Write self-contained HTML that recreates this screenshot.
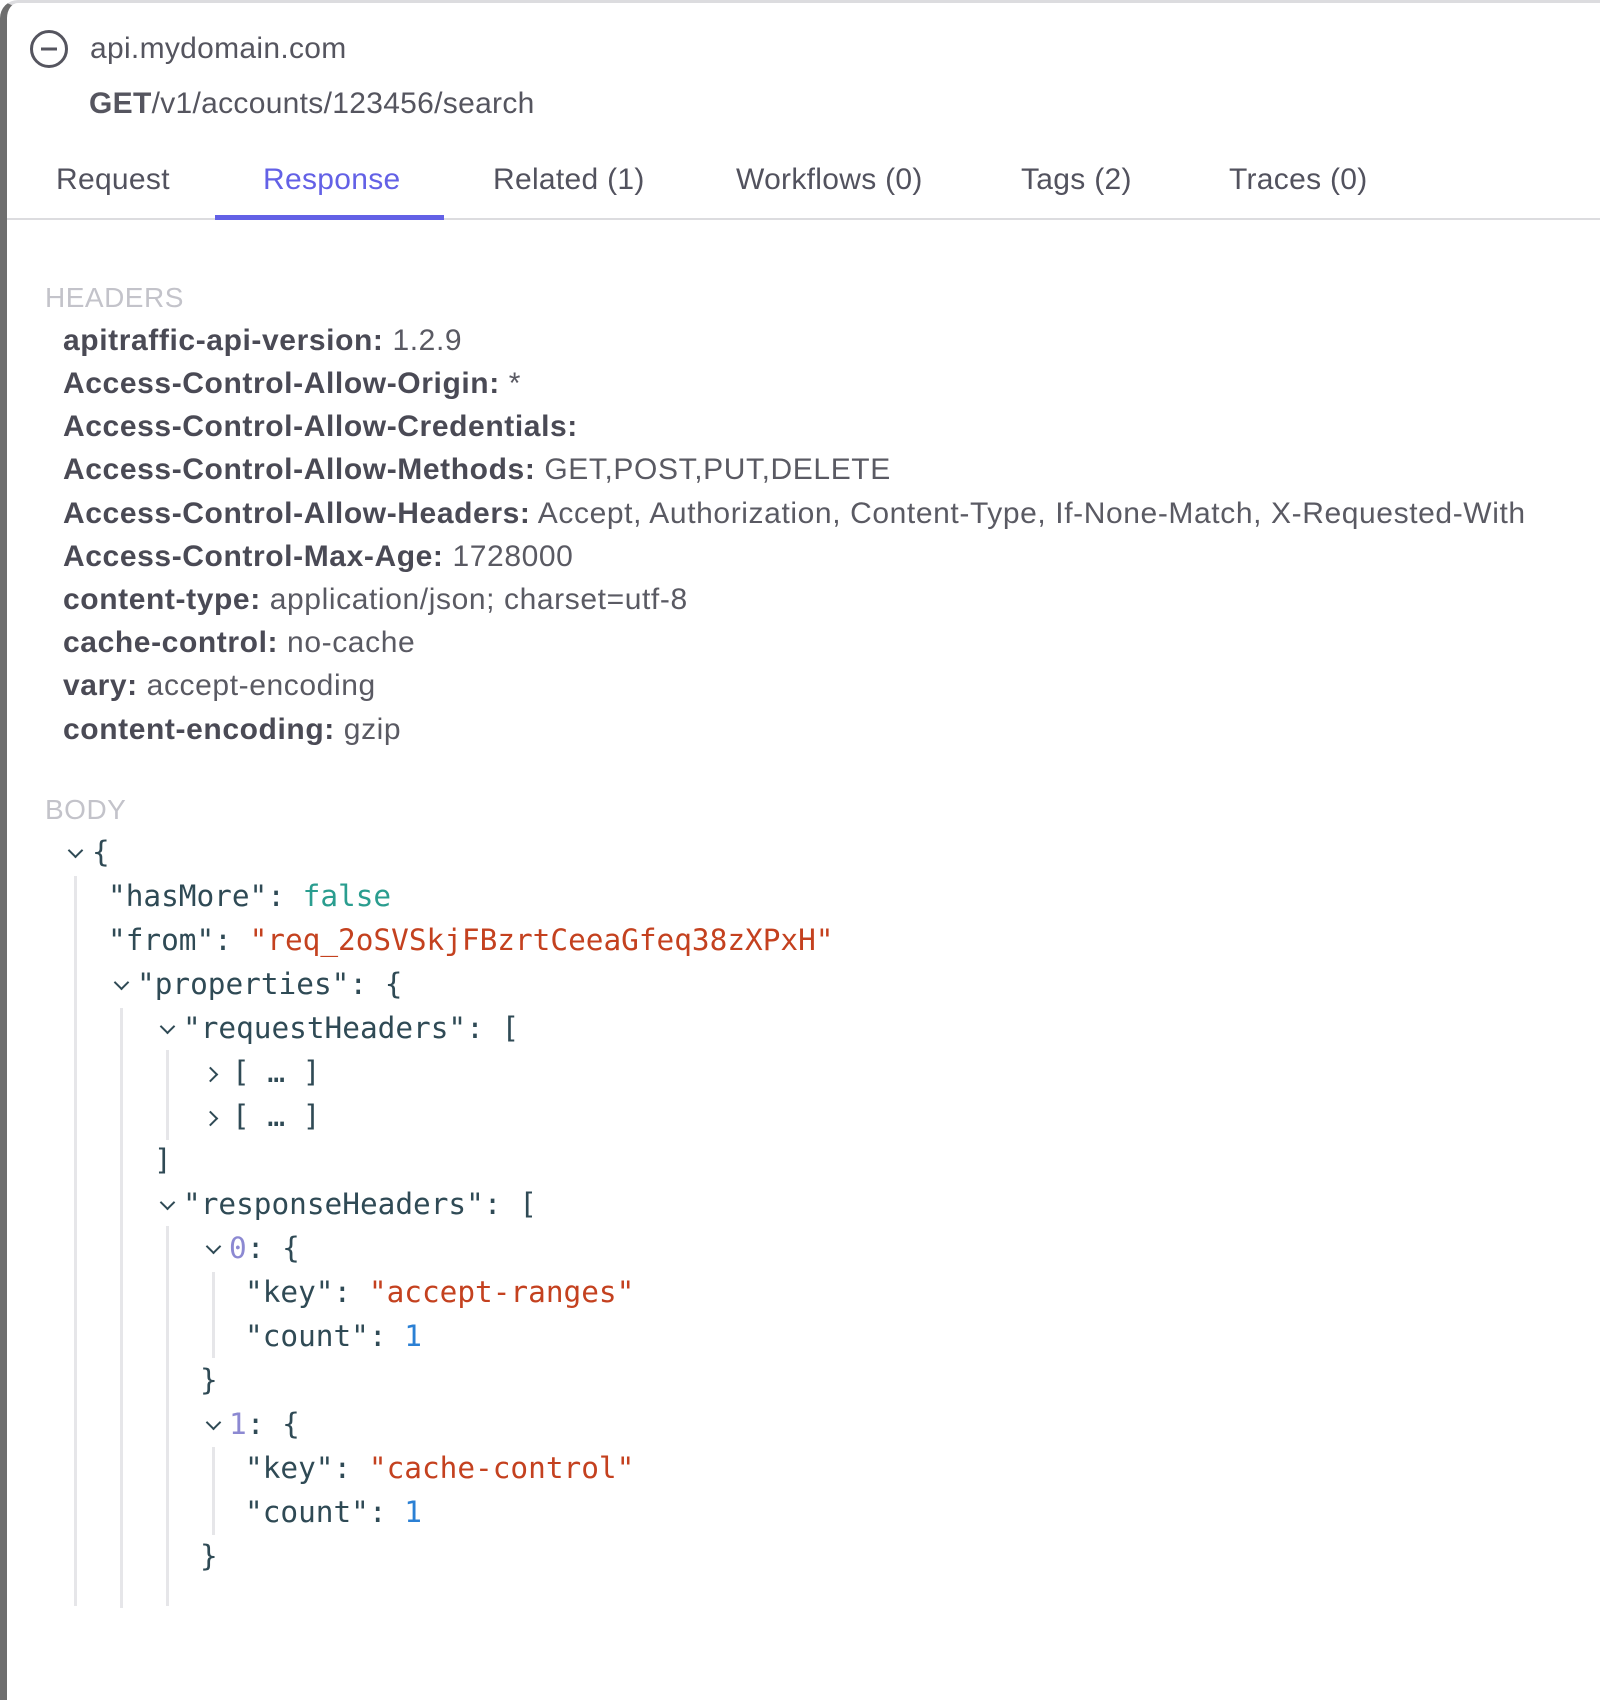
<!DOCTYPE html>
<html><head><meta charset="utf-8"><style>
html,body{margin:0;padding:0;background:#fff;}
body{width:1600px;height:1600px;position:relative;overflow:hidden;font-family:"Liberation Sans",sans-serif;color:#52525e;}
.frame{position:absolute;left:0;top:0;width:1640px;height:1700px;border-left:7px solid #6e6e6e;border-top:3px solid #dcdcdf;border-top-left-radius:18px;box-sizing:border-box;}
.a{position:absolute;white-space:pre;}
.t{font-size:30px;top:163px;color:#52525e;letter-spacing:0.3px;}
.h{font-size:30px;left:63px;color:#5a5a63;letter-spacing:0.6px;}
.h b{color:#4a4a55;}
.lab{font-size:28px;left:45px;color:#c3c3ca;letter-spacing:0.5px;}
.m{font-family:"DejaVu Sans Mono","Liberation Mono",monospace;font-size:29.4px;color:#2f4a55;line-height:44px;}
.s{color:#c4411f}.n{color:#2b80d4}.f{color:#2a9d8f}.i{color:#8c89d2}
.chev{position:absolute;width:9px;height:9px;border-right:2.5px solid #2f4a55;border-bottom:2.5px solid #2f4a55;}
.g{position:absolute;width:3px;background:#e6e6e9;}
</style></head><body>
<div class="frame"></div>
<svg class="a" style="left:29px;top:29px" width="40" height="40" viewBox="0 0 40 40"><circle cx="20" cy="20" r="17.5" fill="none" stroke="#55555f" stroke-width="3"/><line x1="12" y1="20" x2="28" y2="20" stroke="#55555f" stroke-width="3"/></svg>
<div class="a" style="left:90px;top:32px;font-size:30px;color:#55555f;letter-spacing:0.3px">api.mydomain.com</div>
<div class="a" style="left:89px;top:87px;font-size:30px;color:#55555f;letter-spacing:0.3px"><b>GET</b>/v1/accounts/123456/search</div>
<div class="a t" style="left:56px">Request</div>
<div class="a t" style="left:263px;color:#6361e6">Response</div>
<div class="a t" style="left:493px">Related (1)</div>
<div class="a t" style="left:736px">Workflows (0)</div>
<div class="a t" style="left:1021px">Tags (2)</div>
<div class="a t" style="left:1229px">Traces (0)</div>
<div class="a" style="left:7px;top:218px;width:1600px;height:2px;background:#dcdcdf"></div>
<div class="a" style="left:215px;top:215px;width:229px;height:5px;background:#6361e6"></div>

<div class="a lab" style="top:282px">HEADERS</div>
<div class="a h" style="top:324px"><b>apitraffic-api-version:</b> 1.2.9</div>
<div class="a h" style="top:367px"><b>Access-Control-Allow-Origin:</b> *</div>
<div class="a h" style="top:410px"><b>Access-Control-Allow-Credentials:</b></div>
<div class="a h" style="top:453px"><b>Access-Control-Allow-Methods:</b> GET,POST,PUT,DELETE</div>
<div class="a h" style="top:497px"><b>Access-Control-Allow-Headers:</b> Accept, Authorization, Content-Type, If-None-Match, X-Requested-With</div>
<div class="a h" style="top:540px"><b>Access-Control-Max-Age:</b> 1728000</div>
<div class="a h" style="top:583px"><b>content-type:</b> application/json; charset=utf-8</div>
<div class="a h" style="top:626px"><b>cache-control:</b> no-cache</div>
<div class="a h" style="top:669px"><b>vary:</b> accept-encoding</div>
<div class="a h" style="top:713px"><b>content-encoding:</b> gzip</div>
<div class="a lab" style="top:794px">BODY</div>

<div class="g" style="left:74px;top:876px;height:730px"></div>
<div class="g" style="left:120px;top:1008px;height:600px"></div>
<div class="g" style="left:166px;top:1050px;height:90px"></div>
<div class="g" style="left:166px;top:1226px;height:380px"></div>
<div class="g" style="left:212px;top:1272px;height:86px"></div>
<div class="g" style="left:212px;top:1447px;height:88px"></div>

<div class="chev" style="left:70px;top:845px;transform:rotate(45deg)"></div>
<div class="a m" style="left:92px;top:830px">{</div>
<div class="a m" style="left:108px;top:874px">"hasMore": <span class="f">false</span></div>
<div class="a m" style="left:108px;top:918px">"from": <span class="s">"req_2oSVSkjFBzrtCeeaGfeq38zXPxH"</span></div>
<div class="chev" style="left:116px;top:977px;transform:rotate(45deg)"></div>
<div class="a m" style="left:137px;top:962px">"properties": {</div>
<div class="chev" style="left:162px;top:1021px;transform:rotate(45deg)"></div>
<div class="a m" style="left:183px;top:1006px">"requestHeaders": [</div>
<div class="chev" style="left:205px;top:1069px;transform:rotate(-45deg)"></div>
<div class="a m" style="left:232px;top:1050px">[ … ]</div>
<div class="chev" style="left:205px;top:1113px;transform:rotate(-45deg)"></div>
<div class="a m" style="left:232px;top:1094px">[ … ]</div>
<div class="a m" style="left:154px;top:1138px">]</div>
<div class="chev" style="left:162px;top:1197px;transform:rotate(45deg)"></div>
<div class="a m" style="left:183px;top:1182px">"responseHeaders": [</div>
<div class="chev" style="left:208px;top:1241px;transform:rotate(45deg)"></div>
<div class="a m" style="left:229px;top:1226px"><span class="i">0</span>: {</div>
<div class="a m" style="left:245px;top:1270px">"key": <span class="s">"accept-ranges"</span></div>
<div class="a m" style="left:245px;top:1314px">"count": <span class="n">1</span></div>
<div class="a m" style="left:200px;top:1358px">}</div>
<div class="chev" style="left:208px;top:1417px;transform:rotate(45deg)"></div>
<div class="a m" style="left:229px;top:1402px"><span class="i">1</span>: {</div>
<div class="a m" style="left:245px;top:1446px">"key": <span class="s">"cache-control"</span></div>
<div class="a m" style="left:245px;top:1490px">"count": <span class="n">1</span></div>
<div class="a m" style="left:200px;top:1534px">}</div>
</body></html>
